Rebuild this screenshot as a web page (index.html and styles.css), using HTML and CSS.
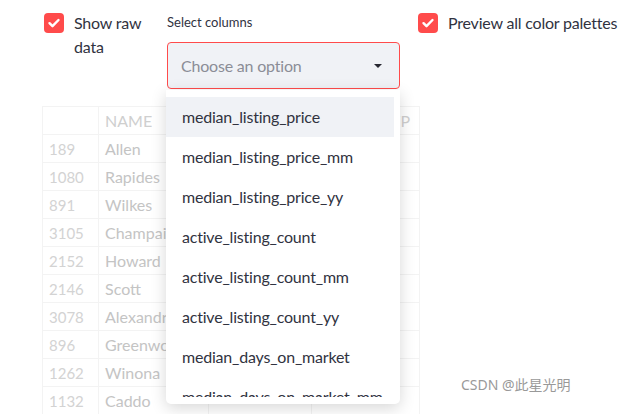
FILE: index.html
```html
<!DOCTYPE html>
<html lang="en">
<head>
  <meta charset="UTF-8">
  <title>Columns</title>
  <link rel="stylesheet" href="styles.css">
</head>
<body>
  <div class="controls">
    <label class="check check-raw">
      <span class="box"><svg viewBox="0 0 20 20"><path d="M5.5 10.2l3 3 6-6.2"/></svg></span>
      <span class="check-text">Show raw data</span>
    </label>
    <div class="select-wrap">
      <div class="select-label">Select columns</div>
      <div class="select">
        <span class="placeholder">Choose an option</span>
        <svg class="caret" viewBox="0 0 8 4"><path d="M0 0h8L4 4z"/></svg>
      </div>
      <div class="menu">
        <ul class="menu-list">
          <li class="active">median_listing_price</li>
          <li>median_listing_price_mm</li>
          <li>median_listing_price_yy</li>
          <li>active_listing_count</li>
          <li>active_listing_count_mm</li>
          <li>active_listing_count_yy</li>
          <li>median_days_on_market</li>
          <li>median_days_on_market_mm</li>
        </ul>
      </div>
    </div>
    <label class="check">
      <span class="box"><svg viewBox="0 0 20 20"><path d="M5.5 10.2l3 3 6-6.2"/></svg></span>
      <span class="check-text">Preview all color palettes</span>
    </label>
  </div>

  <div class="table-wrap">
    <table class="data">
      <thead>
        <tr><th class="idx"></th><th class="name">NAME</th><th class="mid"></th><th class="last">STATEFP</th></tr>
      </thead>
      <tbody>
        <tr><td class="idx">189</td><td>Allen</td><td></td><td></td></tr>
        <tr><td class="idx">1080</td><td>Rapides</td><td></td><td></td></tr>
        <tr><td class="idx">891</td><td>Wilkes</td><td></td><td></td></tr>
        <tr><td class="idx">3105</td><td>Champaign</td><td></td><td></td></tr>
        <tr><td class="idx">2152</td><td>Howard</td><td></td><td></td></tr>
        <tr><td class="idx">2146</td><td>Scott</td><td></td><td></td></tr>
        <tr><td class="idx">3078</td><td>Alexandria</td><td></td><td></td></tr>
        <tr><td class="idx">896</td><td>Greenwood</td><td></td><td></td></tr>
        <tr><td class="idx">1262</td><td>Winona</td><td></td><td></td></tr>
        <tr><td class="idx">1132</td><td>Caddo</td><td></td><td></td></tr>
      </tbody>
    </table>
  </div>

  <div class="watermark">CSDN @此星光明</div>
</body>
</html>
```

FILE: styles.css
```css
body { margin:0; background:#fff; color:#31333f; overflow:hidden;
       font-family:Lato, "Noto Sans", "Noto Sans CJK SC", sans-serif; font-size:16px;
       letter-spacing:-0.2px; }

.controls { display:flex; align-items:flex-start; padding:13px 0 0 44px; height:93px; box-sizing:border-box; }

.check { display:flex; align-items:flex-start; gap:10px; line-height:24px; }
.check-raw { width:106px; margin-right:17px; }
.box { flex:none; width:20px; height:20px; background:#ff4b4b; border-radius:4px; }
.box svg { width:20px; height:20px; display:block; fill:none; stroke:#fff; stroke-width:2.4;
           stroke-linecap:round; stroke-linejoin:round; }
.check-text { margin-top:-2px; }

.select-wrap { position:relative; width:233px; margin-right:18px; }
.select-label { font-size:13px; line-height:18px; height:29px; letter-spacing:0; }
.select { height:47px; box-sizing:border-box; border:1.5px solid #ff4b4b; border-radius:4px;
          background:#f0f2f6; display:flex; align-items:center; justify-content:space-between;
          padding:0 17px 0 13px; }
.placeholder { color:#8b8d96; }
.caret { width:8px; height:4px; fill:#262730; }

.menu { position:absolute; top:77px; left:-1px; width:234px; height:314px; box-sizing:border-box;
        padding:7px 0; background:#fff; border-radius:0 0 5px 5px; z-index:5;
        box-shadow:0 4px 16px rgba(0,0,0,0.16); }
.menu-list { list-style:none; margin:0; padding:0; height:300px; overflow:hidden; }
.menu-list li { height:40px; line-height:40px; padding-left:16px; margin-right:6px; white-space:nowrap; }
.menu-list li.active { background:#f0f2f6; }

.table-wrap { padding-left:42px; margin-top:13px; }
.data { border-collapse:collapse; width:378px; table-layout:fixed; color:#c4c4c4; letter-spacing:0; }
.data th, .data td { height:27px; border:1px solid #f3f3f3; padding:0 6px; text-align:left;
                     font-weight:normal; white-space:nowrap; overflow:hidden; }
.data th { color:#cfcfcf; }
.data .idx { width:43px; color:#d3d3d3; font-size:15px; }
.data th.name { width:97px; }
.data th.mid { width:90px; }
.data th.last { text-align:right; padding-right:9px; }

.watermark { position:absolute; left:461px; top:374px; color:#999; font-size:14px; letter-spacing:0;
             font-family:"Noto Sans", "Noto Sans CJK SC", sans-serif;
             text-shadow:0 0 2px #fff, 0 0 1px #fff; }
```
